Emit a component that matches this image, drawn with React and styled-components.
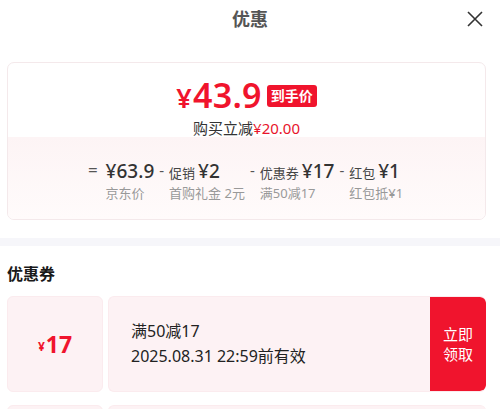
import React from 'react'
import styled, { createGlobalStyle } from 'styled-components'

const GlobalStyle = createGlobalStyle`
    body {
        margin: 0;
        background: #fff;
        font-family: "Noto Sans", "Noto Sans CJK SC", sans-serif;
        color: #1a1a1a;
    }
`;

const Page = styled.div`
    width: 500px;
    height: 409px;
    overflow: hidden;
    background: #fff;
`;

const Header = styled.div`
    position: relative;
    height: 36px;
    display: flex;
    align-items: center;
    justify-content: center;

    > h3 {
        margin: 0;
        font-size: 18px;
        font-weight: 700;
        color: #555;
    }
`;

const Close = styled.button`
    position: absolute;
    right: 16px;
    top: 10px;
    width: 18px;
    height: 18px;
    padding: 0;
    border: none;
    background: none;
    display: flex;
`;

const Card = styled.div`
    margin: 26px 14px 0 7px;
    border: 1px solid #f4e9eb;
    border-radius: 7px;
    overflow: hidden;
`;

const Top = styled.div`
    height: 74px;
    display: flex;
    flex-direction: column;
    align-items: center;
    padding-top: 12px;
    box-sizing: border-box;
`;

const PriceLine = styled.div`
    display: flex;
    align-items: center;
    gap: 5px;
    height: 40px;
`;

const Price = styled.span`
    color: #f0142d;
    font-weight: 600;
    font-size: 34px;
    letter-spacing: 0.3px;

    > small {
        font-size: 27px;
        margin-right: 1px;
    }
`;

const Badge = styled.span`
    background: #f0142d;
    color: #fff;
    font-size: 14px;
    font-weight: 700;
    border-radius: 3px;
    height: 22px;
    line-height: 22px;
    padding: 0 4px;
    margin-top: 2px;
`;

const Save = styled.div`
    font-size: 15px;
    color: #333;
    line-height: 20px;
    margin-top: 3px;

    > span {
        color: #e8132b;
    }
`;

const Bottom = styled.div`
    height: 82px;
    background: linear-gradient(#fdf4f5, #fffbfb);
    display: flex;
    justify-content: center;
    padding: 21px 2px 0 0;
    box-sizing: border-box;
`;

const Item = styled.div`
    display: flex;
    flex-direction: column;
    align-items: flex-start;
`;

const Main = styled.div`
    height: 24px;
    display: flex;
    align-items: baseline;
    color: #444;
    font-size: 13px;
    white-space: nowrap;

    > b {
        font-weight: 500;
        font-size: 19px;
        color: #333;
        margin-left: ${p => (p.$label ? '3px' : '0')};
    }
`;

const Op = styled.div`
    height: 24px;
    line-height: 24px;
    font-size: ${p => (p.$eq ? '17px' : '15px')};
    color: #555;
    margin: ${p => (p.$eq ? '0 8px 0 0' : '0 5px')};
`;

const Sub = styled.div`
    font-size: 13px;
    color: #999;
    margin-top: 1px;
    white-space: nowrap;
`;

const Band = styled.div`
    height: 8px;
    background: #f6f6fa;
    margin-top: 18px;
`;

const Section = styled.div`
    padding: 0 14px 0 7px;

    > h4 {
        margin: 0;
        height: 50px;
        line-height: 56px;
        font-size: 16px;
        font-weight: 700;
        color: #1a1a1a;
    }
`;

const Coupon = styled.div`
    display: flex;
    gap: 5px;
    height: 96px;
    margin-bottom: 13px;
`;

const Stub = styled.div`
    width: 96px;
    background: #fdf2f4;
    border: 1px solid #fbebee;
    border-radius: 6px;
    box-sizing: border-box;
    display: flex;
    align-items: center;
    justify-content: center;
    color: #f0142d;
    font-weight: 700;
    font-size: 23px;

    > small {
        font-size: 12px;
        margin-top: 4px;
        margin-right: 1px;
    }
`;

const Body = styled.div`
    flex: 1;
    display: flex;
    background: #fdf2f4;
    border: 1px solid #fbebee;
    border-right: none;
    border-radius: 6px;
    overflow: hidden;
`;

const Info = styled.div`
    flex: 1;
    padding: 22px 0 0 22px;
    font-size: 16px;
    line-height: 25px;
    color: #222;
`;

const Take = styled.button`
    width: 56px;
    border: none;
    background: ${p => (p.$empty ? 'transparent' : '#f0142d')};
    color: #fff;
    font-family: inherit;
    font-size: 15px;
    line-height: 20px;
    padding: 0;
    border-radius: 0 6px 6px 0;
`;

const rows = [
    { op: '=', label: '', value: '¥63.9', sub: '京东价' },
    { op: '-', label: '促销', value: '¥2', sub: '首购礼金 2元' },
    { op: '-', label: '优惠券', value: '¥17', sub: '满50减17' },
    { op: '-', label: '红包', value: '¥1', sub: '红包抵¥1' },
];

function App() {
    return (
        <Page>
            <GlobalStyle />
            <Header>
                <h3>优惠</h3>
                <Close>
                    <svg width="18" height="18" viewBox="0 0 18 18">
                        <path d="M2 2L16 16M16 2L2 16" stroke="#333" strokeWidth="1.6" />
                    </svg>
                </Close>
            </Header>

            <Card>
                <Top>
                    <PriceLine>
                        <Price><small>¥</small>43.9</Price>
                        <Badge>到手价</Badge>
                    </PriceLine>
                    <Save>购买立减<span>¥20.00</span></Save>
                </Top>
                <Bottom>
                    {rows.map(r => (
                        <React.Fragment key={r.sub}>
                            <Op $eq={r.op === '='}>{r.op}</Op>
                            <Item>
                                <Main $label={!!r.label}>
                                    {r.label}
                                    <b>{r.value}</b>
                                </Main>
                                <Sub>{r.sub}</Sub>
                            </Item>
                        </React.Fragment>
                    ))}
                </Bottom>
            </Card>

            <Band />

            <Section>
                <h4>优惠券</h4>
                <Coupon>
                    <Stub><small>¥</small>17</Stub>
                    <Body>
                        <Info>
                            满50减17<br />
                            2025.08.31 22:59前有效
                        </Info>
                        <Take>立即<br />领取</Take>
                    </Body>
                </Coupon>
                {/* next coupon, only its top edge is in view */}
                <Coupon>
                    <Stub />
                    <Body>
                        <Info />
                        <Take $empty />
                    </Body>
                </Coupon>
            </Section>
        </Page>
    )
}

export default App
